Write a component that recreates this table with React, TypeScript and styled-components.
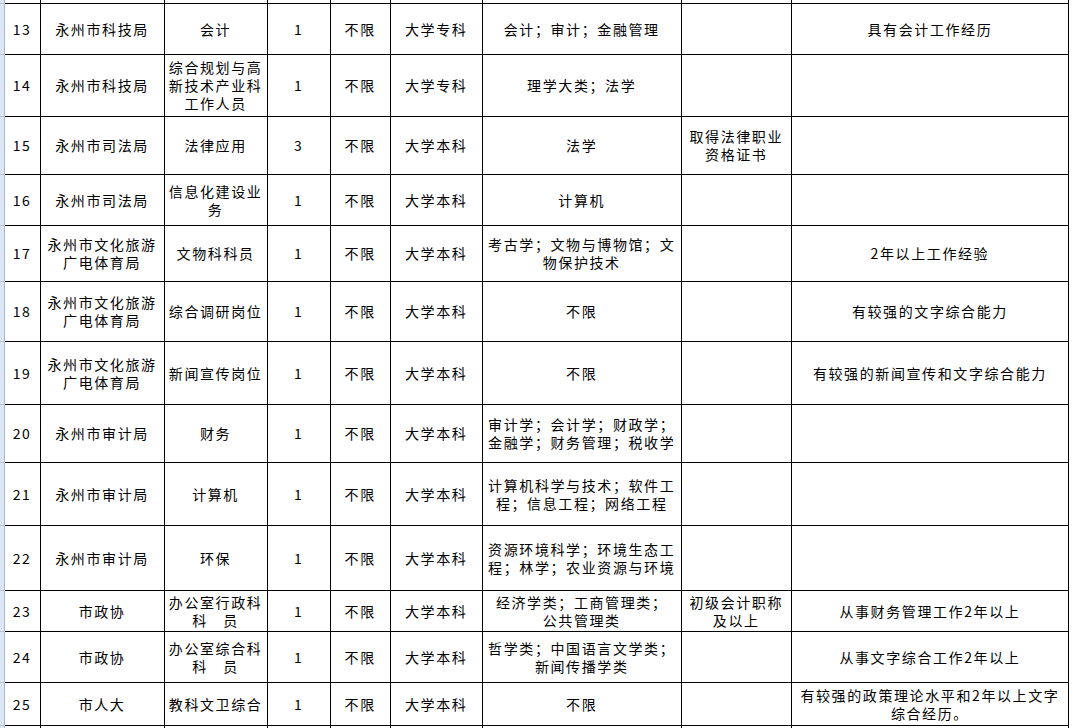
import React from "react";
import styled, {createGlobalStyle} from "styled-components";

// widths between the grid lines, first one is the excel row-header edge
const COLUMN_WIDTHS = [4, 36, 124, 103, 63, 60, 92, 199, 110, 277];

type Post = {
    no: number;
    unit: string;
    post: string;
    count: number;
    age: string;
    edu: string;
    major: string;
    cert: string;
    other: string;
    height: number;
};

const posts: Post[] = [
    {no: 13, unit: "永州市科技局", post: "会计", count: 1, age: "不限", edu: "大学专科", major: "会计；审计；金融管理", cert: "", other: "具有会计工作经历", height: 51},
    {no: 14, unit: "永州市科技局", post: "综合规划与高\n新技术产业科\n工作人员", count: 1, age: "不限", edu: "大学专科", major: "理学大类；法学", cert: "", other: "", height: 62},
    {no: 15, unit: "永州市司法局", post: "法律应用", count: 3, age: "不限", edu: "大学本科", major: "法学", cert: "取得法律职业\n资格证书", other: "", height: 58},
    {no: 16, unit: "永州市司法局", post: "信息化建设业\n务", count: 1, age: "不限", edu: "大学本科", major: "计算机", cert: "", other: "", height: 51},
    {no: 17, unit: "永州市文化旅游\n广电体育局", post: "文物科科员", count: 1, age: "不限", edu: "大学本科", major: "考古学；文物与博物馆；文\n物保护技术", cert: "", other: "2年以上工作经验", height: 56},
    {no: 18, unit: "永州市文化旅游\n广电体育局", post: "综合调研岗位", count: 1, age: "不限", edu: "大学本科", major: "不限", cert: "", other: "有较强的文字综合能力", height: 60},
    {no: 19, unit: "永州市文化旅游\n广电体育局", post: "新闻宣传岗位", count: 1, age: "不限", edu: "大学本科", major: "不限", cert: "", other: "有较强的新闻宣传和文字综合能力", height: 63},
    {no: 20, unit: "永州市审计局", post: "财务", count: 1, age: "不限", edu: "大学本科", major: "审计学；会计学；财政学；\n金融学；财务管理；税收学", cert: "", other: "", height: 58},
    {no: 21, unit: "永州市审计局", post: "计算机", count: 1, age: "不限", edu: "大学本科", major: "计算机科学与技术；软件工\n程；信息工程；网络工程", cert: "", other: "", height: 63},
    {no: 22, unit: "永州市审计局", post: "环保", count: 1, age: "不限", edu: "大学本科", major: "资源环境科学；环境生态工\n程；林学；农业资源与环境", cert: "", other: "", height: 65},
    {no: 23, unit: "市政协", post: "办公室行政科\n科　员", count: 1, age: "不限", edu: "大学本科", major: "经济学类；工商管理类；\n公共管理类", cert: "初级会计职称\n及以上", other: "从事财务管理工作2年以上", height: 41},
    {no: 24, unit: "市政协", post: "办公室综合科\n科　员", count: 1, age: "不限", edu: "大学本科", major: "哲学类；中国语言文学类；\n新闻传播学类", cert: "", other: "从事文字综合工作2年以上", height: 51},
    {no: 25, unit: "市人大", post: "教科文卫综合", count: 1, age: "不限", edu: "大学本科", major: "不限", cert: "", other: "有较强的政策理论水平和2年以上文字\n综合经历。", height: 43},
];

function App() {
    const blank = COLUMN_WIDTHS.slice(1).map((_, i) => <Cell key={i}/>);
    return (
        <>
            <GlobalStyle/>
            <Sheet>
                <colgroup>
                    {COLUMN_WIDTHS.map((w, i) => <Col key={i} $w={w}/>)}
                </colgroup>
                <tbody>
                <EdgeRow $h={3} $top>
                    <Gutter/>
                    {blank}
                </EdgeRow>
                {posts.map(p => (
                    <Row key={p.no} $h={p.height}>
                        <Gutter/>
                        <Cell>{p.no}</Cell>
                        <Cell>{p.unit}</Cell>
                        <Cell>{p.post}</Cell>
                        <Cell>{p.count}</Cell>
                        <Cell>{p.age}</Cell>
                        <Cell>{p.edu}</Cell>
                        <Cell>{p.major}</Cell>
                        <Cell>{p.cert}</Cell>
                        <Cell>{p.other}</Cell>
                    </Row>
                ))}
                <EdgeRow $h={6}>
                    <Gutter/>
                    {blank}
                </EdgeRow>
                </tbody>
            </Sheet>
        </>
    );
}

const GlobalStyle = createGlobalStyle`
  html, body {
    margin: 0;
    padding: 0;
    background: #fff;
    overflow: hidden;
  }

  body {
    font-family: "Noto Sans CJK SC", "Noto Sans", sans-serif;
    color: #000;
  }
`

const Sheet = styled.table`
  border-collapse: collapse;
  table-layout: fixed;
  width: 1069px;
`

const Col = styled.col<{ $w: number }>`
  width: ${({$w}) => $w}px;
`

const Row = styled.tr<{ $h: number }>`
  height: ${({$h}) => $h}px;
`

const EdgeRow = styled(Row)<{ $top?: boolean }>`
  td {
    padding: 0;
    line-height: 0;
    font-size: 0;
    ${({$top}) => $top ? "border-top: none;" : "border-bottom: none;"}
  }
`

const Gutter = styled.td`
  background: #dce6f4;
  border-right: 1px solid #a3b9d6;
  border-bottom: 1px solid #b4c6de;
  padding: 0;
`

const Cell = styled.td`
  border: 1px solid #000;
  padding: 0 2px;
  font-size: 14px;
  letter-spacing: 1.6px;
  line-height: 18px;
  text-align: center;
  vertical-align: middle;
  white-space: pre;
  overflow: hidden;
`

export default App;
